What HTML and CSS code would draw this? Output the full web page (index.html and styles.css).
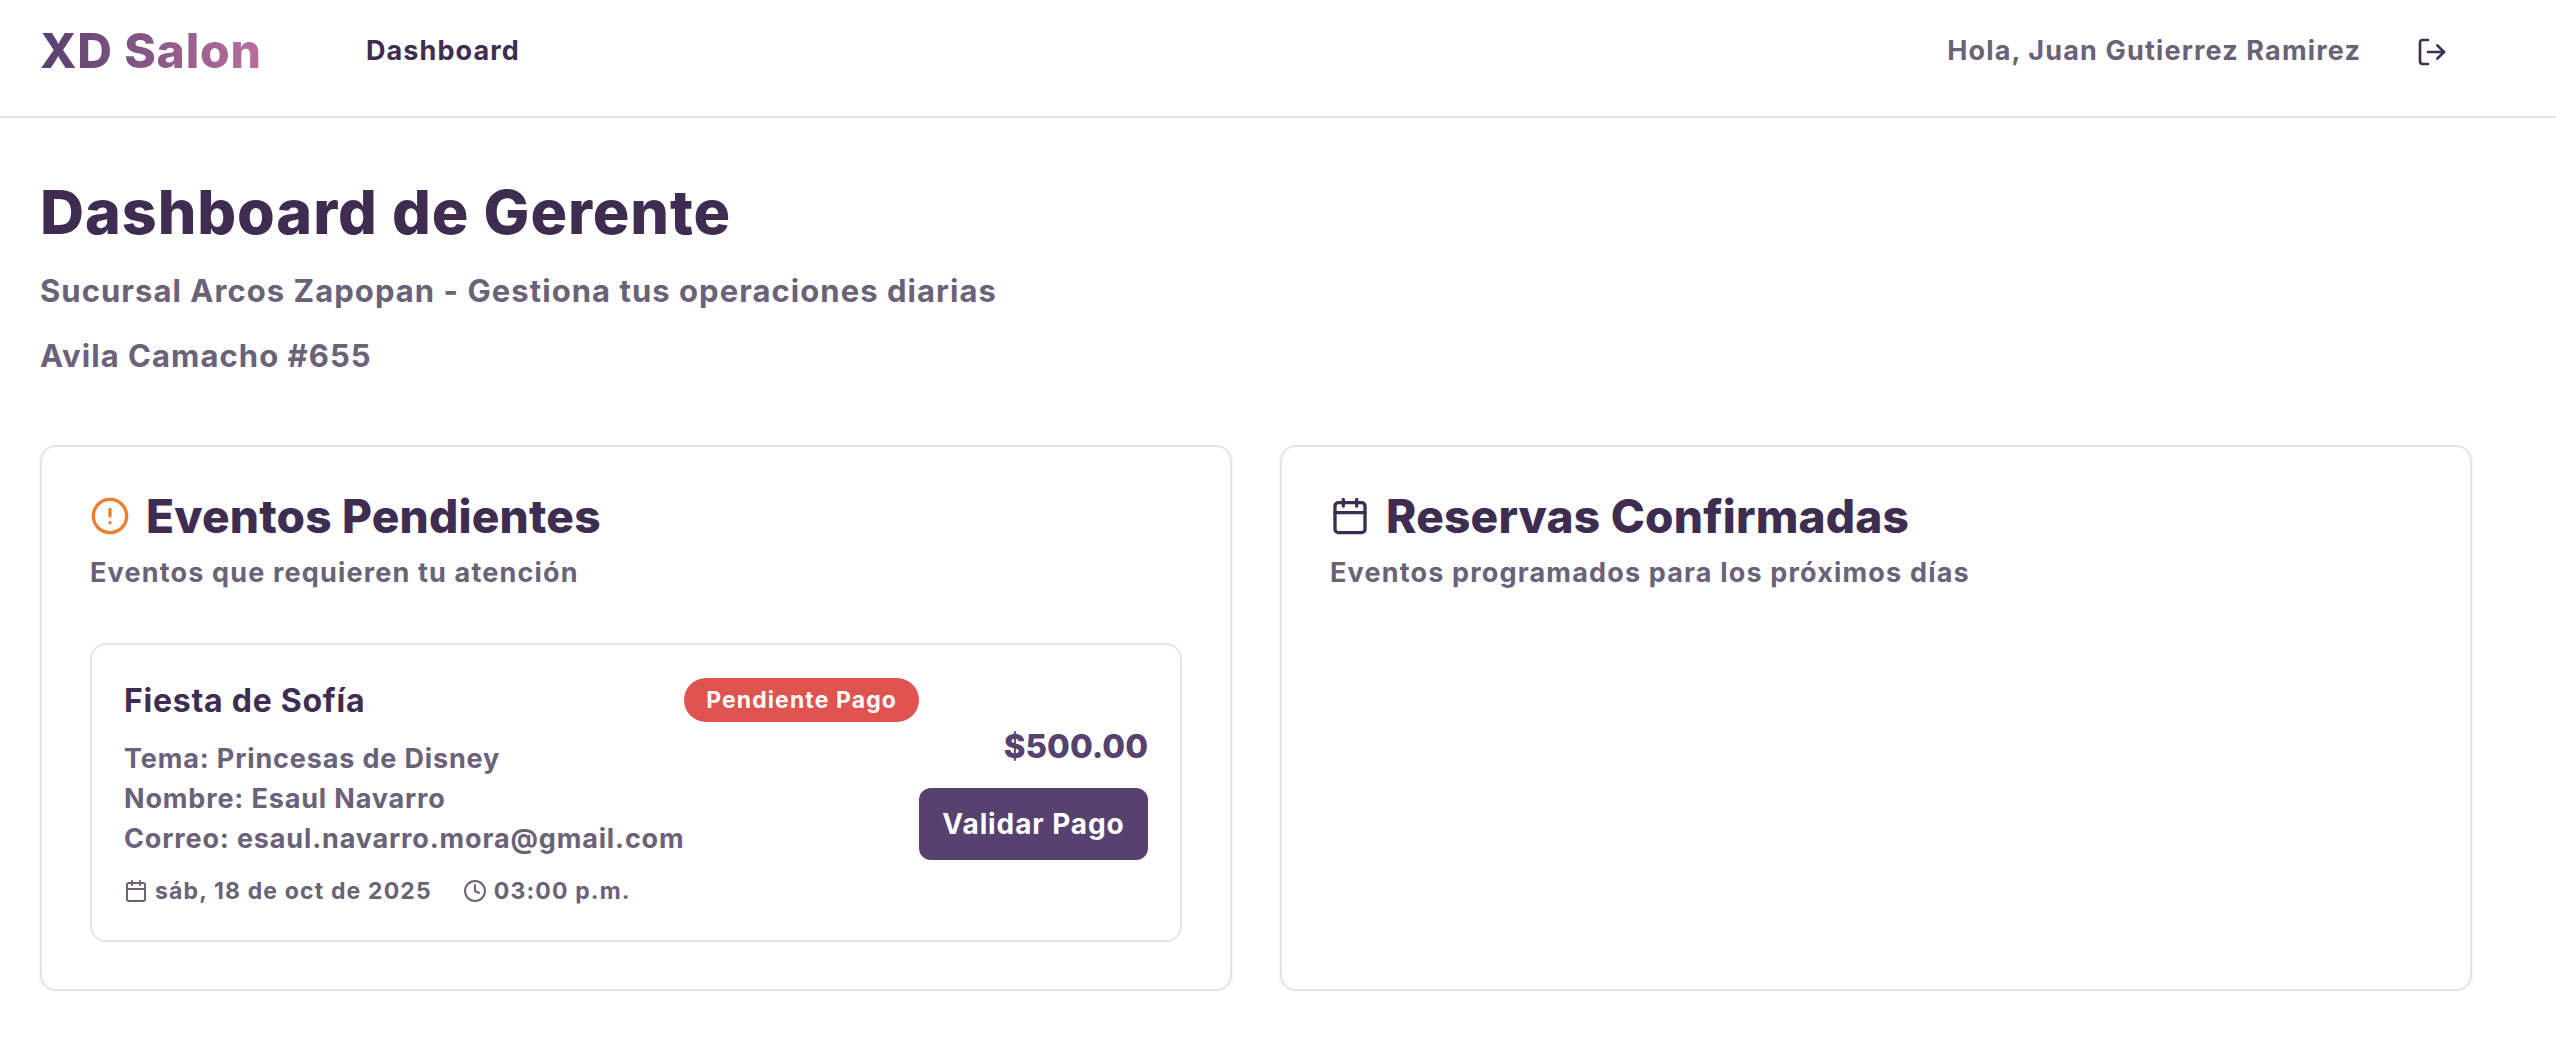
FILE: index.html
```html
<!DOCTYPE html>
<html lang="es">
<head>
    <meta charset="UTF-8">
    <title>Dashboard de Gerente</title>
    <link rel="stylesheet" href="styles.css">
</head>

<body>
    <header class="topbar">
        <div class="topbar-left">
            <span class="logo">XD Salon</span>
            <a class="nav-link">Dashboard</a>
        </div>
        <div class="topbar-right">
            <span class="greeting">Hola, Juan Gutierrez Ramirez</span>
            <svg class="logout-icon" viewBox="0 0 24 24" fill="none" stroke="currentColor" stroke-width="2" stroke-linecap="round" stroke-linejoin="round">
                <path d="M9 21H5a2 2 0 0 1-2-2V5a2 2 0 0 1 2-2h4"/>
                <path d="M16 17l5-5-5-5"/>
                <path d="M21 12H9"/>
            </svg>
        </div>
    </header>

    <main class="page">
        <h1>Dashboard de Gerente</h1>
        <p class="subtitle">Sucursal Arcos Zapopan - Gestiona tus operaciones diarias</p>
        <p class="subtitle address">Avila Camacho #655</p>

        <div class="columns">
            <section class="panel">
                <h2>
                    <svg class="panel-icon alert" viewBox="0 0 24 24" fill="none" stroke="currentColor" stroke-width="2" stroke-linecap="round" stroke-linejoin="round">
                        <circle cx="12" cy="12" r="10"/>
                        <path d="M12 8v4"/>
                        <path d="M12 16h.01"/>
                    </svg>
                    Eventos Pendientes
                </h2>
                <p class="panel-desc">Eventos que requieren tu atención</p>

                <div class="event">
                    <div class="event-info">
                        <div class="event-head">
                            <h3>Fiesta de Sofía</h3>
                            <span class="badge">Pendiente Pago</span>
                        </div>
                        <p>Tema: Princesas de Disney</p>
                        <p>Nombre: Esaul Navarro</p>
                        <p>Correo: esaul.navarro.mora@gmail.com</p>
                        <div class="event-when">
                            <span class="when-item">
                                <svg viewBox="0 0 24 24" fill="none" stroke="currentColor" stroke-width="2" stroke-linecap="round" stroke-linejoin="round">
                                    <path d="M8 2v4"/>
                                    <path d="M16 2v4"/>
                                    <rect x="3" y="4" width="18" height="18" rx="2"/>
                                    <path d="M3 10h18"/>
                                </svg>
                                sáb, 18 de oct de 2025
                            </span>
                            <span class="when-item">
                                <svg viewBox="0 0 24 24" fill="none" stroke="currentColor" stroke-width="2" stroke-linecap="round" stroke-linejoin="round">
                                    <circle cx="12" cy="12" r="10"/>
                                    <path d="M12 6v6l4 2"/>
                                </svg>
                                03:00 p.m.
                            </span>
                        </div>
                    </div>
                    <div class="event-side">
                        <span class="price">$500.00</span>
                        <button class="validate">Validar Pago</button>
                    </div>
                </div>
            </section>

            <section class="panel">
                <h2>
                    <svg class="panel-icon" viewBox="0 0 24 24" fill="none" stroke="currentColor" stroke-width="2" stroke-linecap="round" stroke-linejoin="round">
                        <path d="M8 2v4"/>
                        <path d="M16 2v4"/>
                        <rect x="3" y="4" width="18" height="18" rx="2"/>
                        <path d="M3 10h18"/>
                    </svg>
                    Reservas Confirmadas
                </h2>
                <p class="panel-desc">Eventos programados para los próximos días</p>
            </section>
        </div>
    </main>
</body>
</html>
```

FILE: styles.css
```css
body {
    margin: 0;
    background: #fff;
    color: #3e2d50;
    font-family: Inter, 'Noto Sans', sans-serif;
    font-weight: 700;
}

.topbar {
    height: 116px;
    border-bottom: 2px solid #e4e3e9;
    padding: 0 89px 0 40px;
    display: flex;
    justify-content: space-between;
    align-items: flex-start;
}

.topbar-left,
.topbar-right {
    display: flex;
    align-items: center;
    height: 100px;
}

.logo {
    width: 326px;
    font-size: 48px;
    letter-spacing: 0.8px;
    font-weight: 800;
    background: linear-gradient(90deg, #57416f, #b86e9d 220px);
    -webkit-background-clip: text;
    background-clip: text;
    color: transparent;
}

.nav-link {
    font-size: 27px;
    letter-spacing: 1.1px;
}

.greeting {
    font-size: 27px;
    letter-spacing: 1.15px;
    color: #6b6178;
}

.logout-icon {
    width: 32px;
    height: 32px;
    margin-top: 4px;
    margin-left: 55px;
    margin-right: 19px;
}

.page {
    padding: 0 84px 0 40px;
}

h1 {
    margin: 0;
    padding-top: 54px;
    font-size: 61px;
    letter-spacing: 0.9px;
    line-height: 80px;
    font-weight: 800;
}

.subtitle {
    margin: 19px 0 0;
    font-size: 31px;
    letter-spacing: 1.05px;
    line-height: 40px;
    color: #6b6178;
}

.address {
    margin-top: 25px;
}

.columns {
    margin-top: 69px;
    display: grid;
    grid-template-columns: 1fr 1fr;
    gap: 48px;
}

.panel {
    height: 546px;
    box-sizing: border-box;
    border: 2px solid #e4e3e9;
    border-radius: 16px;
    padding: 45px 48px 48px;
    box-shadow: 0 2px 4px rgba(0, 0, 0, 0.04);
}

h2 {
    margin: 0;
    display: flex;
    align-items: center;
    gap: 16px;
    font-size: 46px;
    letter-spacing: 0.2px;
    line-height: 48px;
    font-weight: 800;
}

.panel-icon {
    width: 40px;
    height: 40px;
}

.alert {
    color: #ed7d31;
}

.panel-desc {
    margin: 13px 0 0;
    font-size: 27px;
    letter-spacing: 1.17px;
    line-height: 40px;
    color: #6b6178;
}

.event {
    margin-top: 50px;
    height: 299px;
    box-sizing: border-box;
    border: 2px solid #e4e3e9;
    border-radius: 16px;
    padding: 33px 32px 32px;
    display: flex;
    justify-content: space-between;
}

.event-head {
    display: flex;
    align-items: center;
    justify-content: space-between;
    margin-bottom: 17px;
}

h3 {
    margin: 0;
    font-size: 32px;
    letter-spacing: 0.75px;
    font-weight: 700;
}

.badge {
    background: #e0544f;
    color: #fff;
    font-size: 23px;
    letter-spacing: 1.1px;
    line-height: 44px;
    padding: 0 22px;
    border-radius: 22px;
}

.event-info {
    flex: 1;
    color: #6b6178;
}

.event-info h3 {
    color: #3e2d50;
}

.event-info p {
    margin: 0;
    font-size: 27px;
    letter-spacing: 0.85px;
    line-height: 40px;
}

.event-when {
    margin-top: 18px;
    display: flex;
    gap: 31px;
    font-size: 23px;
    letter-spacing: 1.15px;
}

.when-item {
    display: flex;
    align-items: center;
    gap: 7px;
}

.when-item svg {
    width: 24px;
    height: 24px;
}

.event-side {
    display: flex;
    flex-direction: column;
    align-items: flex-end;
    padding-top: 48px;
}

.price {
    font-size: 33px;
    line-height: 40px;
    font-weight: 800;
    color: #57416f;
}

.validate {
    margin-top: 22px;
    width: 229px;
    height: 72px;
    border: none;
    border-radius: 12px;
    background: #57416f;
    color: #fff;
    font: inherit;
    font-size: 28px;
    letter-spacing: 0.9px;
}
```
